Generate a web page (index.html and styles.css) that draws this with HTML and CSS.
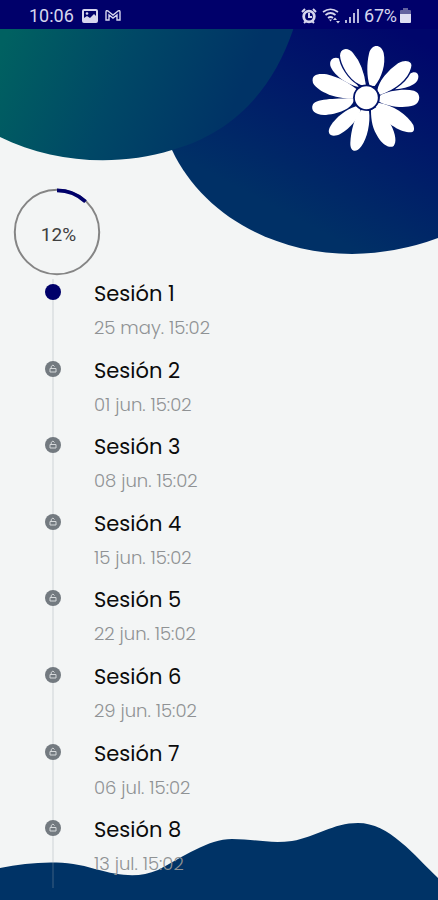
FILE: index.html
```html
<!DOCTYPE html>
<html lang="es">
<head>
  <meta charset="UTF-8">
  <meta name="viewport" content="width=device-width, initial-scale=1.0">
  <title>Sesiones</title>
  <link rel="stylesheet" href="styles.css">
</head>
<body>
  <div class="screen">
    <!-- Background shapes -->
    <svg class="background" viewBox="0 0 438 900">
      <defs>
        <linearGradient id="teal" gradientUnits="userSpaceOnUse" x1="0" y1="50" x2="220" y2="140">
          <stop offset="0" stop-color="#006161"/>
          <stop offset="0.5" stop-color="#004866"/>
          <stop offset="1" stop-color="#003366"/>
        </linearGradient>
        <linearGradient id="navy" gradientUnits="userSpaceOnUse" x1="380" y1="20" x2="280" y2="210">
          <stop offset="0" stop-color="#00066b"/>
          <stop offset="1" stop-color="#003066"/>
        </linearGradient>
      </defs>
      <path fill="url(#navy)" d="M172 0V150C202 214 273 254 352 254Q398 253 438 238V0Z"/>
      <path fill="url(#teal)" d="M0 0H300L293 30C273 89 234 133 172 150C117 167 53 163 0 137Z"/>
      <path fill="#003366" d="M0 868C31 862 65 859 95 869C121 876 139 878 158 870C183 857 208 839 232 839C254 839 270 844 292 841C316 837 333 823 358 823C389 823 414 855 438 878V900H0Z"/>
    </svg>

    <header class="status-bar">
      <div class="status-left">
        <span class="clock">10:06</span>
        <svg class="picture-icon" viewBox="0 0 16 14">
          <path fill="#d6d6ee" fill-rule="evenodd" d="M2 0H14Q16 0 16 2V12Q16 14 14 14H2Q0 14 0 12V2Q0 0 2 0ZM2 2V9L5 7L8 9L12 5L14 7V2Z"/>
          <circle cx="5" cy="4.5" r="1.3" fill="#d6d6ee"/>
        </svg>
        <svg class="mail-icon" viewBox="0 0 16 13">
          <path d="M1 11V3Q1 1 3 2L8 6L13 2Q15 1 15 3V11H12V6L8 9L4 6V11Z"/>
        </svg>
      </div>
      <div class="status-right">
        <svg class="alarm-icon" viewBox="0 0 16 16">
          <circle cx="8" cy="8.5" r="5.3" fill="#00006a" stroke="#d6d6ee" stroke-width="2.8"/>
          <path d="M1 4L4 1M15 4L12 1M3 15L5 13M13 15L11 13M8 5V9H11" fill="none" stroke="#d6d6ee" stroke-width="2"/>
        </svg>
        <svg class="wifi-icon" viewBox="0 0 18 16">
          <path d="M1 4Q8.500-1.500 16 4M3.500 7Q8.500 3 13.500 7M6 10Q8.500 8 11 10" fill="none" stroke="#d6d6ee" stroke-width="1.700"/>
          <path d="M7 11.500H10L8.500 13.500ZM11 12L13 9.500L15 12ZM14 13H18L16 15.500Z" fill="#d6d6ee"/>
        </svg>
        <svg class="signal-icon" viewBox="0 0 14 15">
          <path d="M1 12V15M5 9V15M9 5V15M13 1V15" stroke="#d6d6ee" stroke-width="1.700"/>
        </svg>
        <span class="battery-text">67%</span>
        <svg class="battery-icon" viewBox="0 0 11 15">
          <path d="M3 0H8V2H10Q11 2 11 3V6H0V3Q0 2 1 2H3Z" fill="#62629f"/>
          <path d="M0 6H11V14Q11 15 10 15H1Q0 15 0 14Z" fill="#dedef2"/>
        </svg>
      </div>
    </header>

    <div class="banner">
      <svg class="flower" viewBox="0 0 414 390">
        <path d="M176 156C138 148 98 116 91 92C86 68 112 60 126 78Z"/>
        <path d="M285 163C296 140 318 117 340 112C360 110 360 136 342 147C326 157 306 161 285 163Z"/>
        <path class="outlined" d="M200 152C192 154 180 152 174 148C145 132 120 92 118 62C119 36 144 34 160 52C184 80 196 118 200 152Z"/>
        <path d="M209 152C200 124 200 84 207 56C214 26 244 26 251 54C258 88 246 126 224 153Z"/>
        <path class="outlined" d="M230 166C234 138 262 104 293 83C318 70 342 76 335 99C326 134 290 164 239 182Z"/>
        <path d="M159 190C118 194 56 174 39 144C32 118 54 115 80 118C116 126 148 145 170 163Z"/>
        <path d="M162 190C162 218 122 236 78 240C46 242 30 226 39 208C50 190 118 191 162 190Z"/>
        <path d="M240 182C262 168 310 160 342 167C364 174 362 202 342 211C310 222 262 214 238 200Z"/>
        <path d="M168 214L182 225C176 250 150 280 122 296C96 310 76 298 92 272C108 248 136 224 168 214Z"/>
        <path d="M185 224L207 228C212 262 202 310 184 334C168 356 150 350 151 324C153 288 162 246 185 224Z"/>
        <path d="M236 203C278 210 322 238 340 270C348 296 332 294 308 288C276 278 232 240 228 214Z"/>
        <path d="M213 226L230 216C242 234 262 250 272 268C288 300 290 322 281 333C268 342 246 326 235 308C218 282 213 258 213 226Z"/>
        <circle class="flower-center" cx="199" cy="188" r="37"/>
      </svg>
    </div>

    <main class="content">
      <div class="progress">
        <svg class="progress-ring" viewBox="0 0 88 88">
          <circle class="track" cx="44" cy="44" r="42.200"/>
          <circle class="value" cx="44" cy="44" r="41.700" pathLength="100"/>
        </svg>
        <span class="progress-text">12%</span>
      </div>

      <ul class="timeline">
        <li class="session">
          <span class="marker active"></span>
          <div class="info">
            <h2>Sesión 1</h2>
            <p>25 may. 15:02</p>
          </div>
        </li>
        <li class="session">
          <span class="marker"><svg viewBox="0 0 16 16"><path d="M5 7.500H11V11H5ZM6.200 7.500V5.500Q8 2.500 9.500 5.500"/></svg></span>
          <div class="info">
            <h2>Sesión 2</h2>
            <p>01 jun. 15:02</p>
          </div>
        </li>
        <li class="session">
          <span class="marker"><svg viewBox="0 0 16 16"><path d="M5 7.500H11V11H5ZM6.200 7.500V5.500Q8 2.500 9.500 5.500"/></svg></span>
          <div class="info">
            <h2>Sesión 3</h2>
            <p>08 jun. 15:02</p>
          </div>
        </li>
        <li class="session">
          <span class="marker"><svg viewBox="0 0 16 16"><path d="M5 7.500H11V11H5ZM6.200 7.500V5.500Q8 2.500 9.500 5.500"/></svg></span>
          <div class="info">
            <h2>Sesión 4</h2>
            <p>15 jun. 15:02</p>
          </div>
        </li>
        <li class="session">
          <span class="marker"><svg viewBox="0 0 16 16"><path d="M5 7.500H11V11H5ZM6.200 7.500V5.500Q8 2.500 9.500 5.500"/></svg></span>
          <div class="info">
            <h2>Sesión 5</h2>
            <p>22 jun. 15:02</p>
          </div>
        </li>
        <li class="session">
          <span class="marker"><svg viewBox="0 0 16 16"><path d="M5 7.500H11V11H5ZM6.200 7.500V5.500Q8 2.500 9.500 5.500"/></svg></span>
          <div class="info">
            <h2>Sesión 6</h2>
            <p>29 jun. 15:02</p>
          </div>
        </li>
        <li class="session">
          <span class="marker"><svg viewBox="0 0 16 16"><path d="M5 7.500H11V11H5ZM6.200 7.500V5.500Q8 2.500 9.500 5.500"/></svg></span>
          <div class="info">
            <h2>Sesión 7</h2>
            <p>06 jul. 15:02</p>
          </div>
        </li>
        <li class="session">
          <span class="marker"><svg viewBox="0 0 16 16"><path d="M5 7.500H11V11H5ZM6.200 7.500V5.500Q8 2.500 9.500 5.500"/></svg></span>
          <div class="info">
            <h2>Sesión 8</h2>
            <p>13 jul. 15:02</p>
          </div>
        </li>
      </ul>
    </main>
  </div>
</body>
</html>
```

FILE: styles.css
```css
* {
  box-sizing: border-box;
}

body {
  margin: 0;
  background: #f3f5f5;
  font-family: Poppins, Inter, sans-serif;
}

.screen {
  position: relative;
  width: 438px;
  height: 900px;
  overflow: hidden;
}

.background {
  position: absolute;
  top: 0;
  left: 0;
  width: 438px;
  height: 900px;
  z-index: -1;
}

.status-bar {
  display: flex;
  justify-content: space-between;
  align-items: center;
  height: 29px;
  padding: 2px 27px 0 29px;
  background: #00006a;
  color: #d6d6ee;
  font-family: Roboto, sans-serif;
  font-size: 18px;
}

.status-left,
.status-right {
  display: flex;
  align-items: center;
}

.clock {
  width: 45px;
  margin-right: 8px;
}

.picture-icon {
  width: 16px;
  height: 14px;
  margin-right: 7px;
}

.mail-icon {
  width: 16px;
  height: 13px;
  fill: none;
  stroke: #d6d6ee;
  stroke-width: 1.4;
}

.alarm-icon {
  width: 16px;
  height: 16px;
  margin-right: 5px;
}

.wifi-icon {
  width: 18px;
  height: 16px;
  margin-right: 5px;
}

.signal-icon {
  width: 14px;
  height: 15px;
  margin-right: 5px;
}

.battery-text {
  width: 34px;
  margin-right: 2px;
  letter-spacing: -0.2px;
  white-space: nowrap;
}

.battery-icon {
  width: 11px;
  height: 15px;
}

.banner {
  display: flex;
  justify-content: flex-end;
  height: 159px;
  padding-top: 6px;
}

.flower {
  width: 138px;
  height: 130px;
  fill: #ffffff;
}

.flower .outlined {
  stroke: #00126a;
  stroke-width: 4;
}

.flower-center {
  stroke: #00126a;
  stroke-width: 5;
}

.progress {
  display: flex;
  justify-content: center;
  align-items: center;
  position: relative;
  width: 88px;
  height: 88px;
  margin-left: 13px;
}

.progress-ring {
  position: absolute;
  top: 0;
  left: 0;
  width: 88px;
  height: 88px;
  fill: none;
  transform: rotate(-90deg);
}

.track {
  stroke: #858585;
  stroke-width: 2;
}

.value {
  stroke: #00006a;
  stroke-width: 3.8;
  stroke-dasharray: 12 88;
}

.progress-text {
  padding: 5px 0 0 3px;
  color: #404040;
  font-family: Roboto, sans-serif;
  font-size: 19px;
  font-weight: 400;
}

.timeline {
  margin: 3px 0 0;
  padding: 0 0 0 45px;
  list-style: none;
  background: linear-gradient(rgba(150, 160, 168, 0.2), rgba(150, 160, 168, 0.2)) 52px 0 / 2px 609px no-repeat;
}

.session {
  display: flex;
  height: 76.6px;
}

.marker {
  width: 16px;
  height: 16px;
  margin: 5px 33px 0 0;
  border-radius: 50%;
  background: #737a80;
}

.marker.active {
  background: #00006a;
}

.marker svg {
  display: block;
  width: 16px;
  height: 16px;
  fill: none;
  stroke: #d5d8da;
  stroke-width: 1;
}

.info h2 {
  margin: 0;
  color: #0b0b0b;
  font-size: 21px;
  font-weight: 400;
  line-height: 30px;
}

.info p {
  margin: 6px 0 0;
  color: #8f9294;
  font-size: 18px;
  font-weight: 300;
  line-height: 25px;
}
```
